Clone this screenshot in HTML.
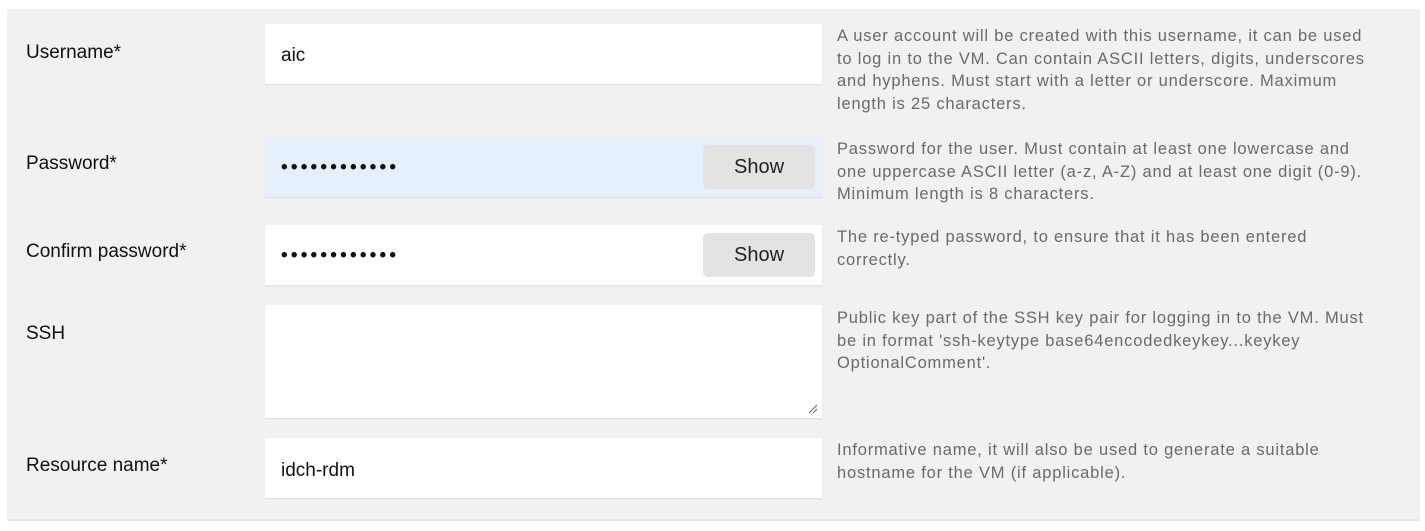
<!DOCTYPE html>
<html><head><style>
body{margin:0;width:1425px;height:531px;background:#fff;font-family:"Liberation Sans",sans-serif;position:relative;overflow:hidden}
.panel{position:absolute;left:7px;top:9px;width:1413px;height:510px;background:#f1f1f1;border-bottom:2px solid #e6e6e6}
.lbl{position:absolute;left:26px;font-size:19px;color:#111}
.in{position:absolute;left:265px;width:557px;background:#fff;box-shadow:0 1px 1px #ddd;font-size:19px;color:#111}
.in span{position:absolute;left:16px}
.btn{position:absolute;left:438px;width:112px;height:44px;top:8px;background:#e3e3e3;border-radius:5px;font-size:20px;text-align:center;line-height:44px;color:#222}
.help{position:absolute;left:837px;width:545px;font-size:16.5px;letter-spacing:0.8px;line-height:22.5px;color:#6a6a6a}
.dots{letter-spacing:3.2px;font-weight:bold}
</style></head><body>
<div class="panel"></div>
<div class="lbl" style="top:42px">Username*</div>
<div class="in" style="top:24px;height:60px"><span style="top:21px">aic</span></div>
<div class="help" style="top:25px">A user account will be created with this username, it can be used<br>to log in to the VM. Can contain ASCII letters, digits, underscores<br>and hyphens. Must start with a letter or underscore. Maximum<br>length is 25 characters.</div>

<div class="lbl" style="top:153px">Password*</div>
<div class="in" style="top:137px;height:60px;background:#e6effc"><span class="dots" style="top:20px">••••••••••••</span><div class="btn" style="left:438px">Show</div></div>
<div class="help" style="top:138px">Password for the user. Must contain at least one lowercase and<br>one uppercase ASCII letter (a-z, A-Z) and at least one digit (0-9).<br>Minimum length is 8 characters.</div>

<div class="lbl" style="top:241px">Confirm password*</div>
<div class="in" style="top:225px;height:60px"><span class="dots" style="top:20px">••••••••••••</span><div class="btn">Show</div></div>
<div class="help" style="top:226px">The re-typed password, to ensure that it has been entered<br>correctly.</div>

<div class="lbl" style="top:323px">SSH</div>
<div class="in" style="top:305px;height:113px"><svg style="position:absolute;right:4px;bottom:4px" width="10" height="10"><path d="M1 9L9 1M5 9L9 5" stroke="#666" stroke-width="1"/></svg></div>
<div class="help" style="top:307px">Public key part of the SSH key pair for logging in to the VM. Must<br>be in format 'ssh-keytype base64encodedkeykey...keykey<br>OptionalComment'.</div>

<div class="lbl" style="top:455px">Resource name*</div>
<div class="in" style="top:438px;height:60px"><span style="top:22px">idch-rdm</span></div>
<div class="help" style="top:439px">Informative name, it will also be used to generate a suitable<br>hostname for the VM (if applicable).</div>
</body></html>
